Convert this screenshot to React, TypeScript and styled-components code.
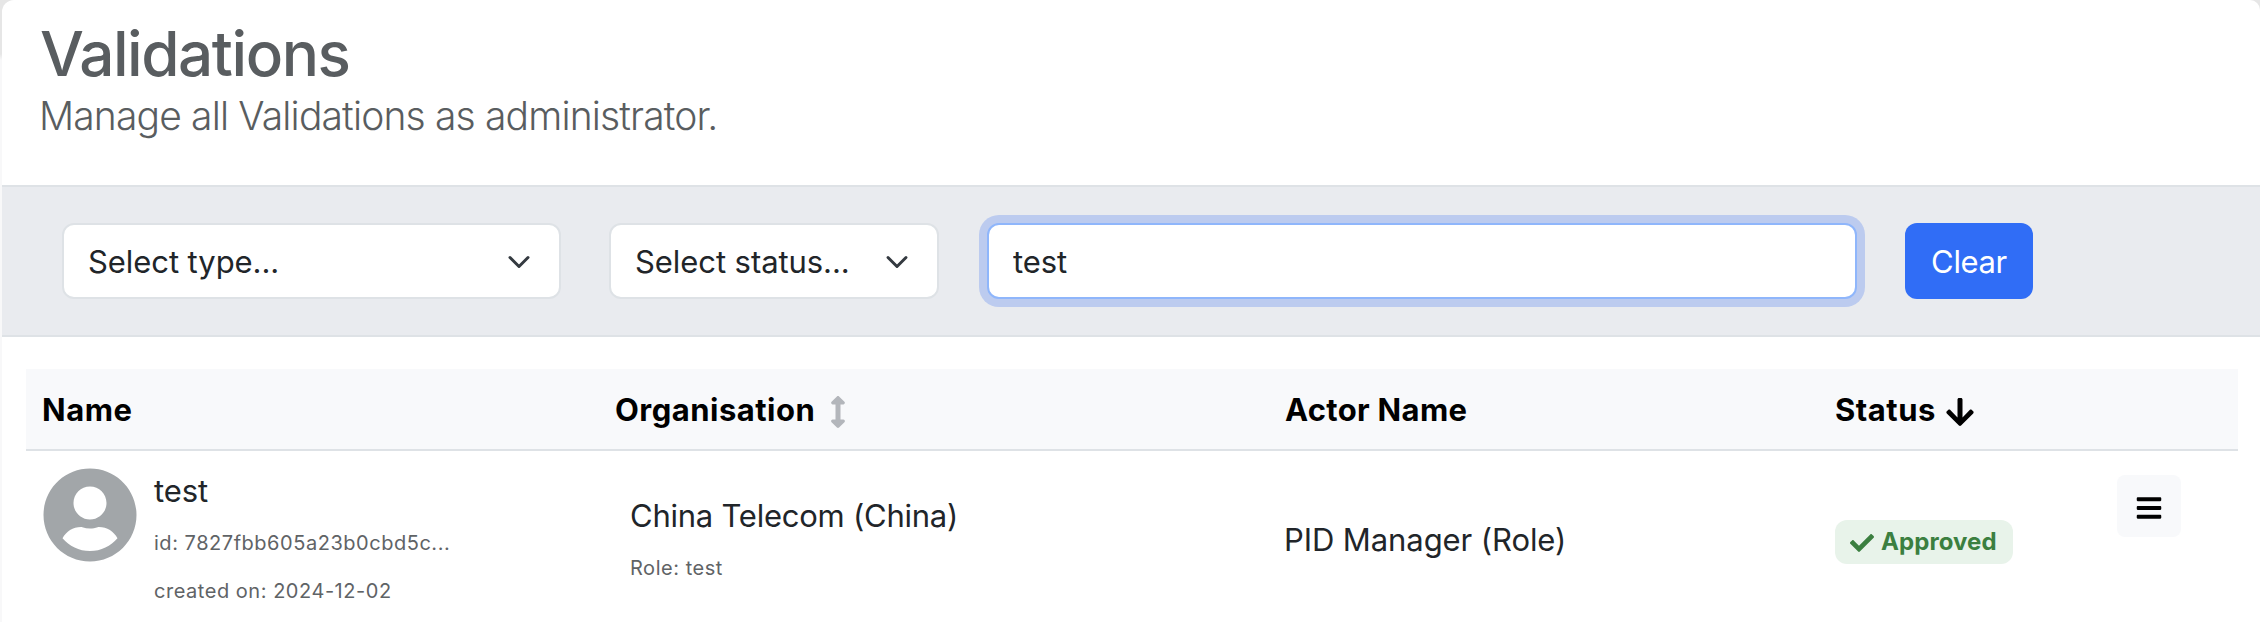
import React, { useState } from 'react';
import styled, { createGlobalStyle } from 'styled-components';
import { FaArrowDown, FaArrowsAltV, FaBars, FaCheck, FaUserCircle } from 'react-icons/fa';

const GlobalStyle = createGlobalStyle`
  *, *::before, *::after { box-sizing: border-box; }
  body {
    margin: 0;
    background: #f8f8f9;
    color: #212529;
    font: 400 31px/48px Inter, "Liberation Sans", sans-serif;
    overflow: hidden;
  }
`;

const Page = styled.main`
  height: 622px;
  padding-left: 2px;
  background: linear-gradient(#e6e6e6 0 54px, #f8f8f9 60px);
  overflow: hidden;
`;

const Panel = styled.div`
  height: 100%;
  background: #fff;
  border-radius: 12px 10px 0 0;
`;

const Header = styled.header`
  height: 185px;
  padding: 15px 0 0 38px;
  color: #595d60;
`;

const Title = styled.h1`
  margin: 0;
  font-size: 62px;
  font-weight: 500;
  line-height: 77px;
  letter-spacing: -1.46px;
`;

const Lead = styled.p`
  margin: 0 0 0 -1px;
  font-size: 39px;
  font-weight: 300;
  line-height: 48px;
  letter-spacing: -0.84px;
`;

const Filters = styled.form`
  display: flex;
  align-items: center;
  height: 152px;
  padding-left: 60px;
  background: #e9ebef;
  border: solid #dee2e6;
  border-width: 2px 0;
`;

const SelectBox = styled.button<{ $width: number }>`
  display: flex;
  align-items: center;
  justify-content: space-between;
  width: ${(p) => p.$width}px;
  height: 76px;
  margin-right: 48px;
  padding: 1px 28px 0 24px;
  border: 2px solid #dee2e6;
  border-radius: 12px;
  background: #fff;
  color: #212529;
  font: inherit;
  letter-spacing: -0.07px;
`;

const SearchInput = styled.input`
  width: 870px;
  height: 76px;
  padding: 1px 24px 0;
  border: 2px solid #8fb6fb;
  border-radius: 12px;
  outline: none;
  background: #fff;
  box-shadow: 0 0 0 8px #bccbef;
  color: #212529;
  font: inherit;
  letter-spacing: -0.09px;
`;

const ClearButton = styled.button`
  width: 128px;
  height: 76px;
  margin-left: 48px;
  padding: 1px 0 0;
  border: 0;
  border-radius: 12px;
  background: #306df6;
  color: #fff;
  font: inherit;
  letter-spacing: -0.36px;
`;

const Table = styled.section`
  width: 2212px;
  margin: 32px 0 0 24px;
`;

const Row = styled.div`
  display: grid;
  grid-template-columns: 573px 670px 550px 281px 138px;
`;

const HeadRow = styled(Row)`
  height: 82px;
  align-items: center;
  background: #f8f9fb;
  border-bottom: 2px solid #dee2e6;
`;

const HeadCell = styled.div<{ $spacing: number }>`
  display: flex;
  align-items: center;
  padding: 1px 0 0 16px;
  color: #000;
  font-weight: 700;
  letter-spacing: ${(p) => p.$spacing}px;
`;

const SortIcon = styled.span<{ $color: string; $gap: number }>`
  display: flex;
  margin: 4px 0 0 ${(p) => p.$gap}px;
  color: ${(p) => p.$color};
`;

const BodyRow = styled(Row)`
  height: 171px;
`;

const NameCell = styled.div`
  display: flex;
  align-items: flex-start;
  gap: 16px;
  padding: 16px 0 0 16px;
`;

const Avatar = styled(FaUserCircle)`
  width: 96px;
  height: 96px;
  color: #a2a6a9;
`;

const Stack = styled.div`
  display: flex;
  flex-direction: column;
`;

const OrgCell = styled(Stack)`
  padding: 41px 0 0 31px;
`;

const Primary = styled.span<{ $spacing: number }>`
  line-height: 48px;
  letter-spacing: ${(p) => p.$spacing}px;
`;

const Meta = styled.small`
  height: 48px;
  color: #5f6366;
  font-size: 20px;
  line-height: 56px;
  letter-spacing: 0.53px;
`;

const ActorCell = styled.div`
  padding: 65px 0 0 15px;
`;

const StatusCell = styled.div`
  padding: 69px 0 0 16px;
`;

const Badge = styled.span`
  display: flex;
  align-items: center;
  width: 178px;
  height: 44px;
  padding: 2px 0 0 15px;
  gap: 7px;
  border-radius: 12px;
  background: #e8f3ea;
  color: #3b7f40;
  font-size: 24px;
  font-weight: 700;
  line-height: 40px;
  letter-spacing: 0.085px;
`;

const BadgeText = styled.span`
  height: 42px;
`;

const ActionCell = styled.div`
  padding: 24px 0 0 17px;
`;

const MenuButton = styled.button`
  display: flex;
  align-items: center;
  justify-content: center;
  width: 64px;
  height: 62px;
  padding: 4px 0 0;
  border: 0;
  border-radius: 8px;
  background: #f8f9fb;
  color: #000;
`;

const Chevron = () => (
  <svg width="24" height="24" viewBox="0 0 16 16" fill="none" stroke="#343a40" strokeWidth="2" strokeLinecap="round" strokeLinejoin="round">
    <path d="m2 5 6 6 6-6" />
  </svg>
);

export default function App() {
  const [query, setQuery] = useState('test');
  return (
    <>
      <GlobalStyle />
      <Page>
        <Panel>
          <Header>
            <Title>Validations</Title>
            <Lead>Manage all Validations as administrator.</Lead>
          </Header>
          <Filters>
            <SelectBox type="button" $width={499}>Select type...<Chevron /></SelectBox>
            <SelectBox type="button" $width={330}>Select status...<Chevron /></SelectBox>
            <SearchInput value={query} onChange={(e) => setQuery(e.target.value)} />
            <ClearButton type="button" onClick={() => setQuery('')}>Clear</ClearButton>
          </Filters>
          <Table>
            <HeadRow>
              <HeadCell $spacing={0.53}>Name</HeadCell>
              <HeadCell $spacing={0.485}>Organisation<SortIcon $color="#b3b6bb" $gap={7}><FaArrowsAltV size={32} /></SortIcon></HeadCell>
              <HeadCell $spacing={0.32}>Actor Name</HeadCell>
              <HeadCell $spacing={0.51}>Status<SortIcon $color="#000" $gap={8}><FaArrowDown size={32} /></SortIcon></HeadCell>
              <div />
            </HeadRow>
            <BodyRow>
              <NameCell>
                <Avatar />
                <Stack>
                  <Primary $spacing={-0.09}>test</Primary>
                  <Meta>id: 7827fbb605a23b0cbd5c...</Meta>
                  <Meta>created on: 2024-12-02</Meta>
                </Stack>
              </NameCell>
              <OrgCell>
                <Primary $spacing={-0.243}>China Telecom (China)</Primary>
                <Meta>Role: test</Meta>
              </OrgCell>
              <ActorCell><Primary $spacing={-0.085}>PID Manager (Role)</Primary></ActorCell>
              <StatusCell>
                <Badge><FaCheck size={24} /><BadgeText>Approved</BadgeText></Badge>
              </StatusCell>
              <ActionCell><MenuButton aria-label="Actions"><FaBars size={28} /></MenuButton></ActionCell>
            </BodyRow>
          </Table>
        </Panel>
      </Page>
    </>
  );
}
